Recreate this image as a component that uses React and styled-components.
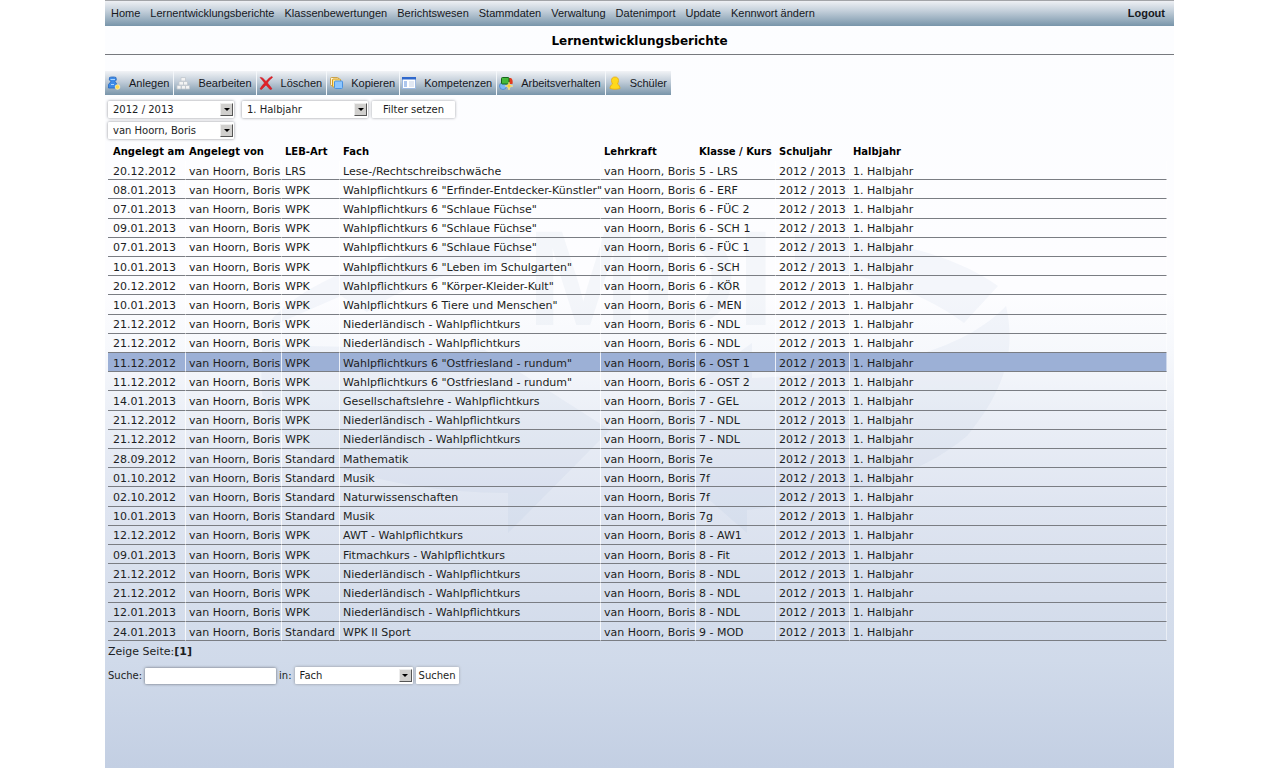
import React, { useState } from 'react';
import styled, { createGlobalStyle } from 'styled-components';

const GlobalStyle = createGlobalStyle`
  * {
    box-sizing: border-box;
  }
  body {
    margin: 0;
    padding: 0 106px 0 105px;
    background: #fff;
    color: #1c1e23;
    font-family: 'DejaVu Sans', Verdana, sans-serif;
    font-size: 11px;
  }
`;

const Page = styled.div`
  position: relative;
  min-height: 100vh;
  background: linear-gradient(
    #fcfdff 0%,
    #fdfdff 38%,
    #f6f8fc 46%,
    #eaeef6 55%,
    #dfe5f1 66%,
    #d6deec 78%,
    #d0daea 86%,
    #c3cfe3 100%
  );
`;

const Watermark = styled.svg`
  position: absolute;
  top: 0;
  left: 0;
  width: 100%;
  pointer-events: none;
`;

const Content = styled.div`
  position: relative;
`;

const Nav = styled.nav`
  display: flex;
  align-items: center;
  gap: 10px;
  height: 26px;
  padding: 0 9px 2px 6px;
  border-top: 1px solid #a2a4a8;
  background: linear-gradient(#eef0f4, #c3cfda 40%, #7895aa);
`;

const NavLink = styled.a`
  color: #16181d;
  font-family: 'Liberation Sans', Arial, sans-serif;
  font-size: 11px;
  font-weight: ${(props) => (props.$strong ? 700 : 400)};
  margin-left: ${(props) => (props.$strong ? 'auto' : 0)};
  text-decoration: none;
  white-space: nowrap;
`;

const Title = styled.h1`
  margin: 0 0 16px;
  padding-top: 2px;
  border-bottom: 1px solid #77797e;
  color: #000;
  font-size: 12px;
  line-height: 26px;
  text-align: center;
`;

const Toolbar = styled.div`
  display: flex;
`;

const ToolButton = styled.button`
  display: flex;
  align-items: center;
  gap: 8px;
  height: 24px;
  padding: 0 4px 0 2px;
  border: 0;
  border-right: 1px solid #f4f7fa;
  background: linear-gradient(#f1f3f6, #c0ccd8 45%, #7995aa);
  color: #16181d;
  font-family: 'Liberation Sans', Arial, sans-serif;
  font-size: 11px;
  white-space: nowrap;
  &:last-child {
    border-right: 0;
  }
`;

const Filters = styled.form`
  display: flex;
  flex-direction: column;
  gap: 4px;
  padding: 6px 3px 3px;
`;

const FilterRow = styled.div`
  display: flex;
  gap: ${(props) => props.$gap}px;
`;

const SelectBox = styled.span`
  position: relative;
  width: ${(props) => props.$width}px;
  height: 17px;
`;

const Select = styled.select`
  width: 100%;
  height: 17px;
  padding: 0 16px 0 5px;
  border: 0;
  border-radius: 1px;
  appearance: none;
  background: #fff;
  box-shadow: 0 0 3px #8a8c92;
  color: #1c1e23;
  font-family: inherit;
  font-size: 10px;
`;

const Arrow = styled.span`
  position: absolute;
  top: 2px;
  right: 1px;
  display: flex;
  align-items: center;
  justify-content: center;
  width: 13px;
  height: 13px;
  border: 1px solid;
  border-color: #eee #555 #555 #eee;
  background: #d0cfcd;
  pointer-events: none;
  &::after {
    content: '';
    border: 3px solid transparent;
    border-top-color: #000;
    border-bottom: 0;
  }
`;

const Button = styled.button`
  height: 17px;
  padding: 0 ${(props) => props.$pad}px;
  border: 0;
  border-radius: 1px;
  background: #fff;
  box-shadow: 0 0 3px #9a9ca2;
  color: #1c1e23;
  font-family: inherit;
  font-size: 10px;
`;

const Table = styled.table`
  width: calc(100% - 10px);
  height: 65vh;
  margin-left: 3px;
  border-collapse: separate;
  border-spacing: 0;
  table-layout: fixed;
`;

const Col = styled.col`
  width: ${(props) => (props.$width ? `${props.$width}px` : 'auto')};
`;

const HeadCell = styled.th`
  height: 19px;
  padding: 0 0 0 4px;
  color: #000;
  font-size: 10px;
  text-align: left;
  white-space: nowrap;
  &:first-child {
    padding-left: 5px;
  }
`;

const Cell = styled.td`
  padding: 2px 0 0 3px;
  border-left: 1px solid rgba(255, 255, 255, 0.8);
  border-bottom: 1px solid #7a7d83;
  line-height: 15px;
  white-space: nowrap;
  &:first-child {
    padding-left: 5px;
    border-left: 0;
  }
  &:last-child {
    border-right: 1px solid rgba(255, 255, 255, 0.5);
  }
`;

const Row = styled.tr`
  background: ${(props) => (props.$selected ? '#9cb0d6' : 'transparent')};
`;

const Pager = styled.div`
  padding: 0 3px;
  line-height: 22px;
`;

const Search = styled.form`
  display: flex;
  align-items: center;
  gap: 3px;
  padding: 4px 3px;
  font-size: 10px;
`;

const SearchInput = styled.input`
  width: 131px;
  height: 16px;
  padding: 0 4px;
  border: 0;
  border-radius: 1px;
  background: #fff;
  box-shadow: 0 0 3px #5e626a;
  font-family: inherit;
  font-size: 10px;
`;

const icons = {
  create: (
    <>
      <path d="M2.500 1.500C4 .8 7.500 .8 9 1.500L9.300 4L8 5.500L10 8.500V12H1.500V8.500L4 5.500L2.300 4Z" fill="#3d8be8" stroke="#2566bd" strokeWidth=".8" />
      <path d="M3.500 3.500H8M4 8.500H7" stroke="#a8d4ff" />
      <circle cx="10.500" cy="11" r="2.300" fill="#ffd84a" stroke="#fff3b8" strokeWidth=".8" />
    </>
  ),
  edit: (
    <g fill="#f3f3f3" stroke="#c2c8ce" strokeWidth=".8">
      <path d="M5 1.500H9.500V5H5Z" />
      <path d="M3 5.500H7.500V9H3ZM7.500 5.500H11.500V9H7.500Z" />
      <path d="M1 9.500H5V13H1ZM5.500 9.500H9.500V13H5.500ZM9.500 9.500H13.500V13H9.500Z" />
    </g>
  ),
  remove: (
    <path
      d="M1 1.500C3 1 4 2 7 5.500C9 3 11 1 13 .500L13.500 1.500C11 3.500 9.500 5 8.500 7C10 9 12 11 13 13L11 13.500C9.500 12 8.500 10.500 7 9C5.500 10.500 4 12 2.500 13.500L1 13C2 11 4 8.500 5.500 7C4 5 2.500 3 1 1.500Z"
      fill="#e01f26"
      stroke="#c4141e"
      strokeWidth=".5"
    />
  ),
  copy: (
    <>
      <rect x="1.500" y="1.500" width="8" height="8" rx="1" fill="#fdf3d6" stroke="#c9a24a" />
      <rect x="3.500" y="3" width="8" height="8" rx="1" fill="#ffe48a" stroke="#d39b22" />
      <rect x="5.500" y="5" width="8" height="7.500" rx="1" fill="#8cc6ff" stroke="#4a92e0" />
    </>
  ),
  skills: (
    <>
      <rect x=".5" y="1.500" width="13" height="11" fill="#fff" stroke="#9db9e2" />
      <path d="M0 1H14V3.500H0Z" fill="#2f68cc" />
      <path d="M2 6H5M2 8H5M2 10H5" stroke="#5b8ddb" />
      <path d="M7 6H12M7 8H12M7 10H12" stroke="#c3d0e6" />
    </>
  ),
  behaviour: (
    <>
      <path d="M9 2H12C13.500 3 14 5 13.500 8H9Z" fill="#e23b1e" />
      <circle cx="4" cy="10" r="3.500" fill="#7fb8f5" stroke="#3f80cf" strokeWidth=".7" />
      <rect x="2.500" y="1.500" width="7.500" height="6.500" rx="1" fill="#45b93a" stroke="#16661a" />
      <path d="M10 6L11 9L14 10L11 11L10 14L9 11L6 10L9 9Z" fill="#ffcf33" stroke="#fff0a0" strokeWidth=".5" />
    </>
  ),
  pupil: (
    <path
      d="M7 1C9.500 1 10.500 2.500 10.500 4.500C10.500 6 10 7 9.500 8C11 9 12 10.500 12 12.500C9 13.500 5 13.500 2 12.500C2 10.500 3 9 4.500 8C4 7 3.500 6 3.500 4.500C3.500 2.500 4.500 1 7 1Z"
      fill="#ffd91c"
      stroke="#e9ac10"
      strokeWidth=".8"
    />
  ),
};

const Icon = ({ name }) => (
  <svg width="14" height="14" viewBox="0 0 14 14" fill="none" aria-hidden="true">
    {icons[name]}
  </svg>
);

const navItems = [
  'Home',
  'Lernentwicklungsberichte',
  'Klassenbewertungen',
  'Berichtswesen',
  'Stammdaten',
  'Verwaltung',
  'Datenimport',
  'Update',
  'Kennwort ändern',
];

const tools = [
  ['create', 'Anlegen'],
  ['edit', 'Bearbeiten'],
  ['remove', 'Löschen'],
  ['copy', 'Kopieren'],
  ['skills', 'Kompetenzen'],
  ['behaviour', 'Arbeitsverhalten'],
  ['pupil', 'Schüler'],
];

const columns = [
  ['Angelegt am', 77],
  ['Angelegt von', 96],
  ['LEB-Art', 58],
  ['Fach', 261],
  ['Lehrkraft', 95],
  ['Klasse / Kurs', 80],
  ['Schuljahr', 74],
  ['Halbjahr', 0],
];

const reports = [
  ['20.12.2012', 'LRS', 'Lese-/Rechtschreibschwäche', '5 - LRS'],
  ['08.01.2013', 'WPK', 'Wahlpflichtkurs 6 "Erfinder-Entdecker-Künstler"', '6 - ERF'],
  ['07.01.2013', 'WPK', 'Wahlpflichtkurs 6 "Schlaue Füchse"', '6 - FÜC 2'],
  ['09.01.2013', 'WPK', 'Wahlpflichtkurs 6 "Schlaue Füchse"', '6 - SCH 1'],
  ['07.01.2013', 'WPK', 'Wahlpflichtkurs 6 "Schlaue Füchse"', '6 - FÜC 1'],
  ['10.01.2013', 'WPK', 'Wahlpflichtkurs 6 "Leben im Schulgarten"', '6 - SCH'],
  ['20.12.2012', 'WPK', 'Wahlpflichtkurs 6 "Körper-Kleider-Kult"', '6 - KÖR'],
  ['10.01.2013', 'WPK', 'Wahlpflichtkurs 6 Tiere und Menschen"', '6 - MEN'],
  ['21.12.2012', 'WPK', 'Niederländisch - Wahlpflichtkurs', '6 - NDL'],
  ['21.12.2012', 'WPK', 'Niederländisch - Wahlpflichtkurs', '6 - NDL'],
  ['11.12.2012', 'WPK', 'Wahlpflichtkurs 6 "Ostfriesland - rundum"', '6 - OST 1'],
  ['11.12.2012', 'WPK', 'Wahlpflichtkurs 6 "Ostfriesland - rundum"', '6 - OST 2'],
  ['14.01.2013', 'WPK', 'Gesellschaftslehre - Wahlpflichtkurs', '7 - GEL'],
  ['21.12.2012', 'WPK', 'Niederländisch - Wahlpflichtkurs', '7 - NDL'],
  ['21.12.2012', 'WPK', 'Niederländisch - Wahlpflichtkurs', '7 - NDL'],
  ['28.09.2012', 'Standard', 'Mathematik', '7e'],
  ['01.10.2012', 'Standard', 'Musik', '7f'],
  ['02.10.2012', 'Standard', 'Naturwissenschaften', '7f'],
  ['10.01.2013', 'Standard', 'Musik', '7g'],
  ['12.12.2012', 'WPK', 'AWT - Wahlpflichtkurs', '8 - AW1'],
  ['09.01.2013', 'WPK', 'Fitmachkurs - Wahlpflichtkurs', '8 - Fit'],
  ['21.12.2012', 'WPK', 'Niederländisch - Wahlpflichtkurs', '8 - NDL'],
  ['21.12.2012', 'WPK', 'Niederländisch - Wahlpflichtkurs', '8 - NDL'],
  ['12.01.2013', 'WPK', 'Niederländisch - Wahlpflichtkurs', '8 - NDL'],
  ['24.01.2013', 'Standard', 'WPK II Sport', '9 - MOD'],
];

const teacher = 'van Hoorn, Boris';

const Dropdown = ({ label, width, value, id }) => (
  <SelectBox $width={width}>
    <Select id={id} aria-label={label} defaultValue={value}>
      <option>{value}</option>
    </Select>
    <Arrow />
  </SelectBox>
);

const Logo = () => (
  <Watermark viewBox="0 0 1069 768" aria-hidden="true">
    <g fill="#8fa3cf" fillOpacity=".08">
      <path d="M158 330C190 285 270 248 415 234V262C350 268 300 285 262 312L236 296Z" />
      <path d="M690 234C780 236 850 255 893 286L859 323C815 290 755 272 690 266Z" />
      <path d="M158 345L380 350L505 430L403 533V493C270 492 160 455 157 390C156 375 156 355 158 345Z" />
      <path d="M901 306C910 345 904 385 862 436C810 480 730 500 642 510V533L525 430L647 343V378C740 375 850 360 901 306Z" />
    </g>
    <text x="422" y="325" fontFamily="Liberation Sans, Arial, sans-serif" fontSize="135" fontWeight="700" fill="#8fa3c4" fillOpacity=".08">
      MDI
    </text>
  </Watermark>
);

const App = () => {
  const [selected, setSelected] = useState(10);

  return (
    <>
      <GlobalStyle />
      <Page>
        <Logo />
        <Content>
          <Nav>
            {navItems.map((item) => (
              <NavLink key={item} href="#">
                {item}
              </NavLink>
            ))}
            <NavLink href="#" $strong>
              Logout
            </NavLink>
          </Nav>
          <Title>Lernentwicklungsberichte</Title>
          <Toolbar>
            {tools.map(([icon, label]) => (
              <ToolButton key={icon} type="button">
                <Icon name={icon} />
                {label}
              </ToolButton>
            ))}
          </Toolbar>
          <Filters onSubmit={(e) => e.preventDefault()}>
            <FilterRow $gap={8}>
              <Dropdown label="Schuljahr" width={126} value="2012 / 2013" />
              <FilterRow $gap={4}>
                <Dropdown label="Halbjahr" width={126} value="1. Halbjahr" />
                <Button $pad={11}>Filter setzen</Button>
              </FilterRow>
            </FilterRow>
            <FilterRow $gap={8}>
              <Dropdown label="Lehrkraft" width={126} value={teacher} />
            </FilterRow>
          </Filters>
          <Table>
            <colgroup>
              {columns.map(([name, width]) => (
                <Col key={name} $width={width} />
              ))}
            </colgroup>
            <thead>
              <tr>
                {columns.map(([name]) => (
                  <HeadCell key={name}>{name}</HeadCell>
                ))}
              </tr>
            </thead>
            <tbody>
              {reports.map(([date, type, subject, course], i) => (
                <Row key={i} $selected={i === selected} onClick={() => setSelected(i)}>
                  <Cell>{date}</Cell>
                  <Cell>{teacher}</Cell>
                  <Cell>{type}</Cell>
                  <Cell>{subject}</Cell>
                  <Cell>{teacher}</Cell>
                  <Cell>{course}</Cell>
                  <Cell>2012 / 2013</Cell>
                  <Cell>1. Halbjahr</Cell>
                </Row>
              ))}
            </tbody>
          </Table>
          <Pager>
            Zeige Seite:<b>[1]</b>
          </Pager>
          <Search onSubmit={(e) => e.preventDefault()}>
            <label htmlFor="search">Suche:</label>
            <SearchInput id="search" type="text" />
            <label htmlFor="field">in:</label>
            <Dropdown id="field" width={118} value="Fach" />
            <Button $pad={3}>Suchen</Button>
          </Search>
        </Content>
      </Page>
    </>
  );
};

export default App;
